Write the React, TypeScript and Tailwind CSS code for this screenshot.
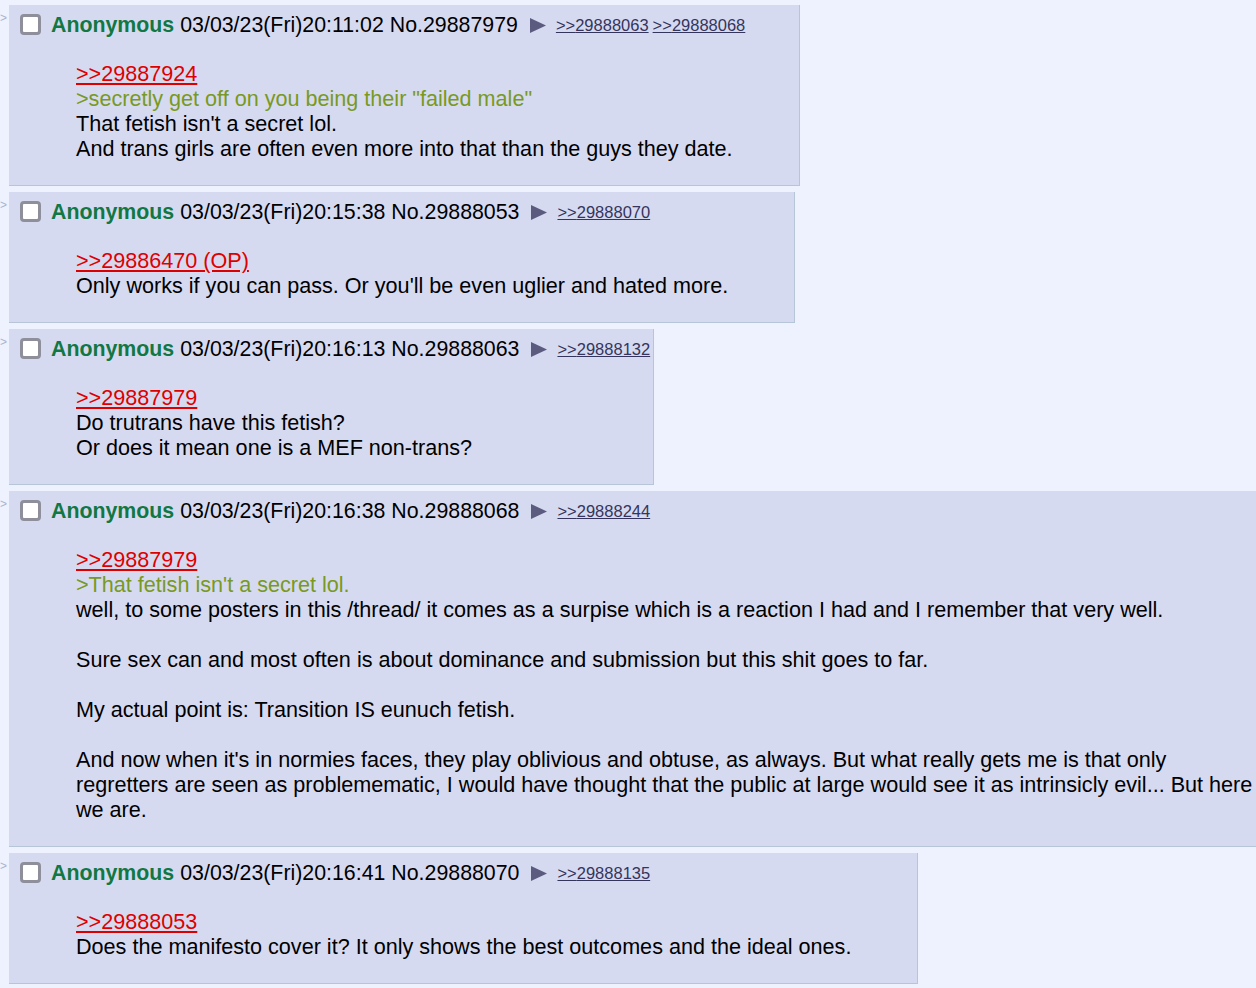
import React from 'react';

type Seg = { t: 'q' | 'g' | 'x' | 'br'; s?: string };

interface Post {
  id: string;
  date: string;
  backlinks: string[];
  body: Seg[];
}

const POSTS: Post[] = [
  {
    id: '29887979',
    date: '03/03/23(Fri)20:11:02',
    backlinks: ['29888063', '29888068'],
    body: [
      { t: 'q', s: '>>29887924' },
      { t: 'g', s: '>secretly get off on you being their "failed male"' },
      { t: 'x', s: "That fetish isn't a secret lol." },
      { t: 'x', s: 'And trans girls are often even more into that than the guys they date.' },
    ],
  },
  {
    id: '29888053',
    date: '03/03/23(Fri)20:15:38',
    backlinks: ['29888070'],
    body: [
      { t: 'q', s: '>>29886470 (OP)' },
      { t: 'x', s: "Only works if you can pass. Or you'll be even uglier and hated more." },
    ],
  },
  {
    id: '29888063',
    date: '03/03/23(Fri)20:16:13',
    backlinks: ['29888132'],
    body: [
      { t: 'q', s: '>>29887979' },
      { t: 'x', s: 'Do trutrans have this fetish?' },
      { t: 'x', s: 'Or does it mean one is a MEF non-trans?' },
    ],
  },
  {
    id: '29888068',
    date: '03/03/23(Fri)20:16:38',
    backlinks: ['29888244'],
    body: [
      { t: 'q', s: '>>29887979' },
      { t: 'g', s: ">That fetish isn't a secret lol." },
      { t: 'x', s: 'well, to some posters in this /thread/ it comes as a surpise which is a reaction I had and I remember that very well.' },
      { t: 'br' },
      { t: 'x', s: 'Sure sex can and most often is about dominance and submission but this shit goes to far.' },
      { t: 'br' },
      { t: 'x', s: 'My actual point is: Transition IS eunuch fetish.' },
      { t: 'br' },
      { t: 'x', s: "And now when it's in normies faces, they play oblivious and obtuse, as always. But what really gets me is that only regretters are seen as problemematic, I would have thought that the public at large would see it as intrinsicly evil... But here we are." },
    ],
  },
  {
    id: '29888070',
    date: '03/03/23(Fri)20:16:41',
    backlinks: ['29888135'],
    body: [
      { t: 'q', s: '>>29888053' },
      { t: 'x', s: 'Does the manifesto cover it? It only shows the best outcomes and the ideal ones.' },
    ],
  },
];

function Reply({ post }: { post: Post }) {
  return (
    <div className="flex items-start">
      <div className="w-[9px] shrink-0 pt-[7px] text-[12px] leading-none text-[#aab4cc]">&gt;</div>
      <div className="bg-[#d6daf0] border-r border-b border-[#b7c5d9] max-w-[1315px]">
        {/* post info */}
        <div className="flex items-center pl-[11px] pr-[3px] pt-[8px] whitespace-nowrap leading-[25px] text-[21.33px]">
          <div className="w-[21px] h-[21px] border-[3px] border-[#8f8f9b] rounded-[4px] bg-white shrink-0 -mt-[2px]" />
          <span className="ml-[10px] font-bold text-[#117743]">Anonymous</span>
          <span className="ml-[6px] text-black">{post.date}</span>
          <span className="ml-[6px] text-black">No.{post.id}</span>
          <svg className="ml-[12px] shrink-0" width="16" height="15" viewBox="0 0 16 15">
            <polygon points="0,0 16,7.5 0,15" fill="#5b5b80" />
          </svg>
          {post.backlinks.map((b, i) => (
            <span
              key={b}
              className={`${i === 0 ? 'ml-[10px]' : 'ml-[4px]'} text-[16.5px] text-[#34345c] underline`}
            >
              &gt;&gt;{b}
            </span>
          ))}
        </div>
        {/* message */}
        <div className="pl-[67px] pr-[66px] pt-[23px] pb-[24px] leading-[25px] text-black">
          {post.body.map((seg, i) => {
            if (seg.t === 'br') return <div key={i} className="h-[25px]" />;
            if (seg.t === 'q') return <div key={i}><span className="text-[#dd0000] underline">{seg.s}</span></div>;
            if (seg.t === 'g') return <div key={i} className="text-[#789922]">{seg.s}</div>;
            return <div key={i}>{seg.s}</div>;
          })}
        </div>
      </div>
    </div>
  );
}

export default function App() {
  return (
    <div className="w-[1256px] h-[988px] overflow-hidden bg-[#eef2ff] text-[21.6px] font-['Liberation_Sans',Arial,sans-serif]">
      <div className="w-[1340px] pt-[5px] flex flex-col items-start gap-[6px]">
        {POSTS.map((p) => (
          <Reply key={p.id} post={p} />
        ))}
      </div>
    </div>
  );
}
